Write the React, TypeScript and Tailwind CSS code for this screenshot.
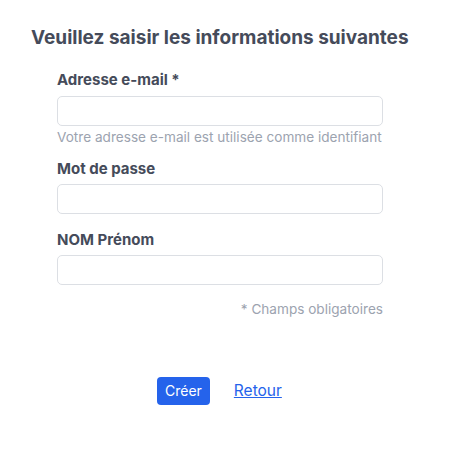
import React from "react";

export default function App() {
  return (
    <div className="w-[453px] h-[453px] bg-white" style={{ fontFamily: "Inter, 'Noto Sans', sans-serif" }}>
      <div className="pt-[26px] pl-[31px]">
        <h1 className="text-[19px] leading-[24px] font-bold text-[#454b5a]">Veuillez saisir les informations suivantes</h1>
      </div>
      <div className="pl-[57px] w-[383px] mt-[20px]">
        <label className="block text-[15px] leading-[20px] font-bold text-[#454b5a]">Adresse e-mail *</label>
        <input className="mt-[6px] block w-[326px] h-[30px] rounded-[5px] border border-[#dcdfe4] bg-white" />
        <p className="mt-[2px] text-[13.6px] leading-[18px] text-[#9ca3af] whitespace-nowrap">Votre adresse e-mail est utilisée comme identifiant</p>
        <label className="block mt-[13px] text-[15px] leading-[20px] font-bold text-[#454b5a]">Mot de passe</label>
        <input type="password" className="mt-[5px] block w-[326px] h-[30px] rounded-[5px] border border-[#dcdfe4] bg-white" />
        <label className="block mt-[16px] text-[15px] leading-[20px] font-bold text-[#454b5a]">NOM Prénom</label>
        <input className="mt-[5px] block w-[326px] h-[30px] rounded-[5px] border border-[#dcdfe4] bg-white" />
        <p className="mt-[15px] w-[326px] text-right text-[13.6px] leading-[18px] text-[#9ca3af]">* Champs obligatoires</p>
      </div>
      <div className="flex items-center pl-[157px] mt-[59px] gap-[24px]">
        <button className="h-[28px] px-[8px] rounded-[4px] bg-[#2563eb] text-white text-[14px] leading-[20px]">Créer</button>
        <a href="#" className="text-[15.5px] leading-[20px] text-[#2563eb] underline">Retour</a>
      </div>
    </div>
  );
}
